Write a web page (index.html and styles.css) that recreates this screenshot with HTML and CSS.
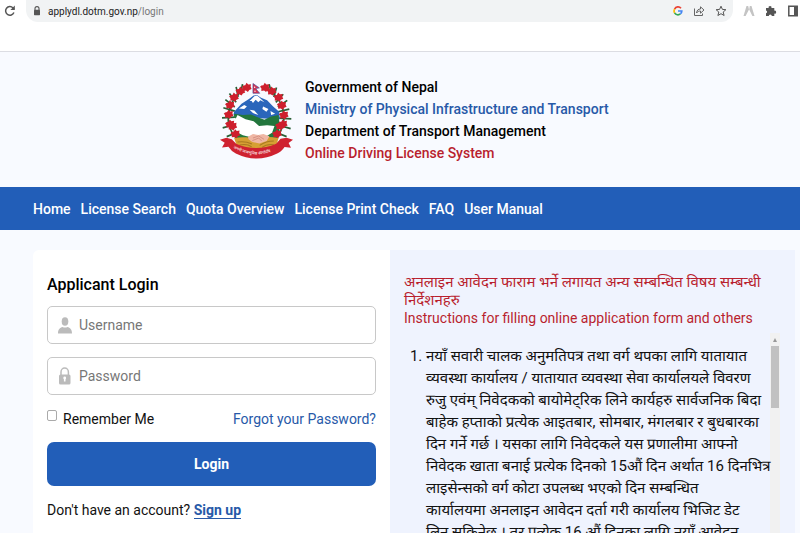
FILE: index.html
```html
<!DOCTYPE html>
<html lang="ne">
  <head>
    <meta charset="UTF-8" />
    <meta name="viewport" content="width=device-width, initial-scale=1.0" />
    <title>Online Driving License System</title>
    <link rel="stylesheet" href="styles.css">
  </head>
  <body>
    <!-- browser toolbar -->
    <div class="toolbar">
      <button class="tool" aria-label="Reload">
        <svg width="12" height="12" viewBox="0 0 12 12"><path d="M9.9 7.5A4.3 4.3 0 1 1 9 2.9L10 4" fill="none" stroke="#555" stroke-width="1.5"/><path d="M10.8.6v4.5H6.4z" fill="#555"/></svg>
      </button>
      <div class="address">
        <svg width="8" height="10" viewBox="0 0 8 10"><path d="M2 4V2.6a2 2 0 0 1 4 0V4" fill="none" stroke="#555" stroke-width="1.1"/><rect x="1" y="3.8" width="6" height="5.4" rx=".6" fill="#555"/></svg>
        <span class="url">applydl.dotm.gov.np<span class="path">/login</span></span>
        <svg width="10" height="10" viewBox="0 0 10 10" fill="none" stroke-width="1.7"><path d="M8 2.2A3.9 3.9 0 0 0 1.6 3.1" stroke="#ea4335"/><path d="M1.6 3.1a3.9 3.9 0 0 0 0 3.8" stroke="#fbbc05"/><path d="M1.6 6.9a3.9 3.9 0 0 0 5.8 1" stroke="#34a853"/><path d="M7.4 7.9A3.8 3.8 0 0 0 8.8 5H5" stroke="#4285f4"/></svg>
        <svg width="12" height="12" viewBox="0 0 12 12" fill="none" stroke="#666" stroke-width="1"><path d="M1.5 3.5v7h8V8.5"/><path d="M3.5 8c.4-2.8 1.8-4 4-4V1.8L11 5 7.500 8.200V6C5.800 6 4.500 6.500 3.500 8z"/></svg>
        <svg width="12" height="12" viewBox="0 0 12 12"><path d="M6 1.200l1.400 3.200 3.500.3-2.700 2.300.9 3.500L6 8.700l-3.100 1.800.9-3.500L1.100 4.700l3.500-.3z" fill="none" stroke="#555"/></svg>
      </div>
      <svg width="12" height="12" viewBox="0 0 12 12"><path d="M3.500 1h1.700L6 4.500 2.600 11H.500zM6.800 1h1.700l3 10H9.400L6.200 4.500z" fill="#c4c4c4"/></svg>
      <svg width="12" height="12" viewBox="0 0 12 12"><path d="M1 3h2.600a1.500 1.500 0 1 1 2.900 0h2.800v2.700a1.500 1.500 0 1 1 0 2.900V11H6.800a1.500 1.500 0 0 0-3 0H1V8.300a1.500 1.500 0 0 0 0-2.900z" fill="#555"/></svg>
      <svg width="12" height="12" viewBox="0 0 12 12"><path d="M1.800 1.300h8.400v9.400H1.800z" fill="#fff" stroke="#555" stroke-width="1.500"/><path d="M7 1h3.500v10H7z" fill="#555"/></svg>
    </div>

    <!-- site header -->
    <header class="header">
      <svg class="emblem" viewBox="30 36 220 225">
        <!-- rhododendron leaves -->
        <path d="M108 54Q50 88 55 157q8 32 26 48M166 54q60 34 53 103-8 33-26 48" fill="none" stroke="#356135" stroke-width="5"/>
        <path d="M97 42l-6 30M78 50l6 30M58 70l20 26M46 88l28 22M40 112l34 10M36 142l38-2M38 172l36-10M50 198l34-14M176 42l8 30M198 52l-8 28M218 72l-22 24M230 90l-28 20M236 116l-34 8M242 145l-38-2M240 174l-35-10M228 198l-34-14" stroke="#285f34" stroke-width="5"/>
        <!-- mountains and hills -->
        <path d="M72 124l22-24 22-14 14-10 10-2 12 8 18 8 18 18 18 16 2 22-130-6-8-6z" fill="#2a66bb"/>
        <path d="M118 92l14-14 8-2 8 6 14 14-12-6-6 6-8-8-8 10-4-6zM86 114l16-10 8 4-8 8zM158 108l16 8-6 8-12-8zM118 118l14 2 12 14-16-6zM180 122l14 8-12 4z" fill="#fff"/>
        <path d="M72 130l26 4 24-2 20 8 20 8 20-10 22-4 4 34-20 18-50-14-40-20-26-10z" fill="#23763d"/>
        <path d="M76 146l6-12 24 12 24 6 16 14 24-2 22 2-10 28-60 2-34-2-14-18z" fill="#fff"/>
        <path d="M70 180l28 14 24 6 44-2 22-14 14-26 6 26-16 34H82z" fill="#237a3c"/>
        <path d="M72 202c18-3 41-3 63 2 20-5 45-7 69-2l-8 29c-36 14-76 14-114 0z" fill="#d6a033"/>
        <path d="M82 214q23-4 43 6M88 223q21-5 36 5M190 211q-23 0-42 13M190 222q-21-3-35 8" fill="none" stroke="#a87821" stroke-width="3"/>
        <path d="M113 198l15-8 16 3 15-3 18 7-8 14-22 7-21-4-11-8z" fill="#efb7a4"/>
        <path d="M128 202l17-6 16 10M126 210l19-8 9 9" fill="none" stroke="#c88073" stroke-width="2"/>
        <!-- rhododendron blooms -->
        <defs>
          <path id="bloom" d="M-11-4l6-1 4-7 5 5 8-1-1 8 3 6-7 3-4 6-6-4-8 1v-8l-4-4z"/>
        </defs>
        <g fill="#ce1f2d">
          <use href="#bloom" x="110" y="50"/><use href="#bloom" x="91" y="61"/>
          <use href="#bloom" x="72" y="79"/><use href="#bloom" x="60" y="102"/>
          <use href="#bloom" x="56" y="130"/><use href="#bloom" x="60" y="159"/>
          <use href="#bloom" x="67" y="165"/><use href="#bloom" x="76" y="188"/>
          <use href="#bloom" x="164" y="50"/><use href="#bloom" x="184" y="61"/>
          <use href="#bloom" x="204" y="79"/><use href="#bloom" x="214" y="103"/>
          <use href="#bloom" x="220" y="132"/><use href="#bloom" x="217" y="159"/>
          <use href="#bloom" x="209" y="164"/><use href="#bloom" x="200" y="188"/>
        </g>
        <!-- flag -->
        <path d="M128 40l19 13-11 2 12 14h-20z" fill="#d9304c" stroke="#4c4d95" stroke-width="2"/>
        <circle cx="133" cy="51" r="2" fill="#fff"/>
        <circle cx="134" cy="63" r="2" fill="#fff"/>
        <!-- motto ribbon -->
        <path d="M30 207l19-6 16 5 13 13q59 26 119 0l13-15 18-3 19 6-13 10 7 14-19-2q-11 16-22 19-61 30-123 0-12-5-22-20l-19 2 8-14z" fill="#cf2230"/>
        <path id="ribbon" d="M66 230q71 42 146 0" fill="none"/>
        <text class="motto"><textPath href="#ribbon" startOffset="4">जननी जन्मभूमिश्च स्वर्गादपि</textPath></text>
      </svg>
      <div class="titles">
        <p>Government of Nepal</p>
        <p class="blue">Ministry of Physical Infrastructure and Transport</p>
        <p>Department of Transport Management</p>
        <p class="red">Online Driving License System</p>
      </div>
    </header>

    <nav class="nav">
      <a href="#">Home</a>
      <a href="#">License Search</a>
      <a href="#">Quota Overview</a>
      <a href="#">License Print Check</a>
      <a href="#">FAQ</a>
      <a href="#">User Manual</a>
    </nav>

    <main class="main">
      <!-- login form -->
      <form class="login">
        <h1>Applicant Login</h1>
        <div class="field">
          <svg width="14" height="17" viewBox="0 0 14 17"><ellipse cx="7" cy="4.500" rx="3.300" ry="4.300" fill="#bbb"/><path d="M0 16.500c0-4 2-6 4.500-6.500q2.500 1 5 0c2.500.5 4.500 2.500 4.500 6.500z" fill="#bbb"/></svg>
          <input type="text" placeholder="Username" aria-label="Username" />
        </div>
        <div class="field">
          <svg width="14" height="18" viewBox="0 0 14 18"><path d="M3 8V5a3.700 4 0 0 1 7.400 0v3" fill="none" stroke="#bbb" stroke-width="1.500"/><rect x="1" y="7.500" width="11.500" height="10" rx="1.500" fill="#bbb"/><path d="M6.700 10.500v4" stroke="#fff" stroke-width="1.600"/><circle cx="6.700" cy="11" r="1.400" fill="#fff"/></svg>
          <input type="password" placeholder="Password" aria-label="Password" />
        </div>
        <div class="options">
          <label><input type="checkbox" />Remember Me</label>
          <a href="#">Forgot your Password?</a>
        </div>
        <button class="submit" type="button">Login</button>
        <p class="signup">Don't have an account? <a href="#">Sign up</a></p>
      </form>

      <!-- instructions -->
      <section class="info">
        <h2><span class="nepali">अनलाइन आवेदन फाराम भर्ने लगायत अन्य सम्बन्धित विषय सम्बन्धी<br />निर्देशनहरु</span>Instructions for filling online application form and others</h2>
        <div class="scroller">
          <ol>
            <li>
              नयाँ सवारी चालक अनुमतिपत्र तथा वर्ग थपका लागि यातायात<br />
              व्यवस्था कार्यालय / यातायात व्यवस्था सेवा कार्यालयले विवरण<br />
              रुजु एवंम् निवेदकको बायोमेट्रिक लिने कार्यहरु सार्वजनिक बिदा<br />
              बाहेक हप्ताको प्रत्येक आइतबार, सोमबार, मंगलबार र बुधबारका<br />
              दिन गर्ने गर्छ । यसका लागि निवेदकले यस प्रणालीमा आफ्नो<br />
              निवेदक खाता बनाई प्रत्येक दिनको 15औं दिन अर्थात 16 दिनभित्र<br />
              लाइसेन्सको वर्ग कोटा उपलब्ध भएको दिन सम्बन्धित<br />
              कार्यालयमा अनलाइन आवेदन दर्ता गरी कार्यालय भिजिट डेट<br />
              लिन सकिनेछ । तर प्रत्येक 16 औं दिनका लागि नयाँ आवेदन
            </li>
          </ol>
          <div class="track">
            <span class="arrow"></span>
            <span class="thumb"></span>
          </div>
        </div>
      </section>
    </main>
  </body>
</html>
```
FILE: styles.css
```css
* {
  box-sizing: border-box;
}

body {
  margin: 0;
  height: 100vh;
  overflow: hidden;
  background: #f8faff;
  color: #111;
  font-family: Roboto, "Noto Sans Devanagari", "Noto Sans", sans-serif;
  font-size: 14px;
}

p,
h1,
h2 {
  margin: 0;
}

a {
  color: #2759a8;
  text-decoration: none;
}

/* browser toolbar */
.toolbar {
  display: flex;
  align-items: flex-start;
  gap: 10px;
  height: 52px;
  padding: 0 1px 0 4px;
  background: #fff;
  border-bottom: 1px solid #dcdde3;
}

.toolbar > svg,
.tool {
  flex: none;
  margin-top: 5px;
}

.tool {
  display: flex;
  padding: 0;
  border: none;
  background: none;
}

.address {
  flex: 1;
  display: flex;
  align-items: center;
  gap: 10px;
  height: 22px;
  padding: 0 6px 0 7px;
  background: #f1f3f4;
  border-radius: 0 0 12px 12px;
}

.url {
  flex: 1;
  margin-left: -3px;
  font-size: 10px;
  color: #222;
}

.path {
  color: #777;
}

/* header */
.header {
  display: flex;
  align-items: center;
  gap: 11px;
  height: 135px;
  padding-left: 220px;
}

.emblem {
  width: 74px;
  height: 78px;
}

.motto {
  font-size: 12px;
  fill: #fff;
}

.titles {
  font-weight: 500;
  font-size: 14px;
  line-height: 22px;
  color: #000;
}

.blue {
  color: #2759a8;
}

.red {
  color: #b91f2e;
}

/* navigation */
.nav {
  display: flex;
  align-items: center;
  gap: 10px;
  height: 43px;
  padding: 0 33px;
  background: #225eb8;
}

.nav a {
  color: #fff;
  font-weight: 500;
}

.main {
  display: grid;
  grid-template-columns: minmax(0, 357fr) minmax(0, 405fr);
  padding: 20px 5px 0 33px;
}

/* login form */
.login {
  padding: 24px 14px;
  background: #fff;
  border-radius: 6px 0 0 6px;
}

.login h1 {
  margin-bottom: 11px;
  font-size: 16px;
  font-weight: 500;
  line-height: 21px;
  color: #000;
}

.field {
  display: flex;
  align-items: center;
  gap: 7px;
  height: 38px;
  margin-bottom: 13px;
  padding: 0 10px;
  border: 1px solid #c8c8c8;
  border-radius: 5px;
}

.field input {
  flex: 1;
  min-width: 0;
  padding: 0;
  border: none;
  outline: none;
  font: inherit;
}

.field input::placeholder {
  color: #777;
}

.options {
  display: flex;
  justify-content: space-between;
  line-height: 22px;
}

.options label {
  display: flex;
  align-items: flex-start;
  gap: 6px;
}

.options input {
  appearance: none;
  width: 10px;
  height: 11px;
  margin: 2px 0 0;
  border: 1px solid #aaa;
  border-radius: 2px;
  background: #fff;
}

.submit {
  display: block;
  width: 100%;
  height: 44px;
  margin: 12px 0 13px;
  border: none;
  border-radius: 7px;
  background: #225eb8;
  color: #fff;
  font: inherit;
  font-weight: 700;
}

.signup {
  line-height: 22px;
}

.signup a {
  font-weight: 700;
  border-bottom: 1px solid #2759a8;
}

/* instructions */
.info {
  padding: 23px 15px 20px 14px;
  background: #eff3fe;
}

.info h2 {
  font-size: 14px;
  font-weight: 400;
  line-height: 18px;
  color: #b91f2e;
  white-space: nowrap;
}

.nepali {
  display: block;
  font-size: 15px;
}

.scroller {
  display: flex;
  height: 280px;
  margin-top: 6px;
}

.info ol {
  flex: 1;
  position: relative;
  z-index: 1;
  min-width: 0;
  margin: 0;
  padding: 12px 0 0 22px;
  font-size: 15px;
  line-height: 22px;
  white-space: nowrap;
}

.track {
  flex: none;
  width: 10px;
  background: #f1f1f1;
}

.arrow {
  display: block;
  width: 4px;
  margin: 5px auto 4px;
  border: 2px solid transparent;
  border-top: none;
  border-bottom: 4px solid #999;
}

.thumb {
  display: block;
  height: 62px;
  margin: 0 1px;
  background: #c1c1c1;
}
```
